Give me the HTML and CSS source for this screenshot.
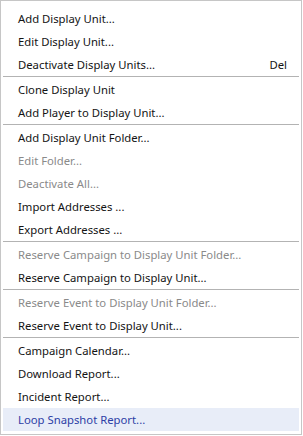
FILE: index.html
```html
<!DOCTYPE html>
<html lang="en">
<head>
  <meta charset="UTF-8" />
  <meta name="viewport" content="width=device-width, initial-scale=1.0"/>
  <title>Display Unit Menu</title>
  <link rel="stylesheet" href="styles.css">
</head>
<body>
  <!-- Menu de contexto das unidades -->
  <ul class="menu">
    <li class="item"><span>Add Display Unit...</span></li>
    <li class="item"><span>Edit Display Unit...</span></li>
    <li class="item"><span>Deactivate Display Units...</span><span class="atalho">Del</span></li>
    <li class="sep"></li>
    <li class="item"><span>Clone Display Unit</span></li>
    <li class="item"><span>Add Player to Display Unit...</span></li>
    <li class="sep"></li>
    <li class="item"><span>Add Display Unit Folder...</span></li>
    <li class="item desativado"><span>Edit Folder...</span></li>
    <li class="item desativado"><span>Deactivate All...</span></li>
    <li class="item"><span>Import Addresses ...</span></li>
    <li class="item"><span>Export Addresses ...</span></li>
    <li class="sep"></li>
    <li class="item desativado"><span>Reserve Campaign to Display Unit Folder...</span></li>
    <li class="item"><span>Reserve Campaign to Display Unit...</span></li>
    <li class="sep"></li>
    <li class="item desativado"><span>Reserve Event to Display Unit Folder...</span></li>
    <li class="item"><span>Reserve Event to Display Unit...</span></li>
    <li class="sep"></li>
    <li class="item"><span>Campaign Calendar...</span></li>
    <li class="item"><span>Download Report...</span></li>
    <li class="item"><span>Incident Report...</span></li>
    <li class="item ativo"><span>Loop Snapshot Report...</span></li>
  </ul>
</body>
</html>
```

FILE: styles.css
```css
/* Página sem margem */
body {
  margin: 0;
  background-color: #ffffff;
  font-family: 'Noto Sans', sans-serif;
  font-size: 11.3px;
}

/* Caixa do menu */
.menu {
  list-style: none;
  box-sizing: border-box;
  width: 302px;
  margin: 0;
  padding: 6px 2px 3px;
  background: #ffffff;
  border: 1px solid #c6c6c6;
}

/* Itens */
.item {
  display: flex;
  justify-content: space-between;
  align-items: center;
  height: 23px;
  padding: 0 12px 0 15px;
  color: #141414;
}

.atalho {
  color: #141414;
}

/* Itens desabilitados */
.item.desativado {
  color: #8a8a8a;
}

/* Item em destaque (hover) */
.item.ativo {
  background-color: #e8edf8;
  color: #2d3fa6;
}

/* Linha separadora */
.sep {
  height: 1px;
  margin-bottom: 1px;
  background-color: #b3b3b3;
}
```
